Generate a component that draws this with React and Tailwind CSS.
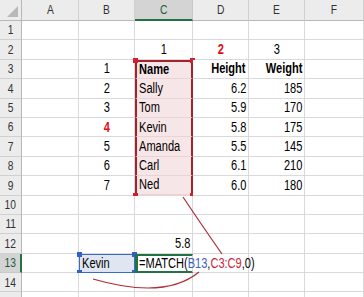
import React from "react";

const COLS = ["A", "B", "C", "D", "E", "F"];

const rows = [
  { n: 1, c: {} },
  { n: 2, c: { C: ["1", "c"], D: ["2", "c", "red"], E: ["3", "c"] } },
  { n: 3, c: { B: ["1", "c"], C: ["Name", "l", "bold"], D: ["Height", "r", "bold"], E: ["Weight", "r", "bold"] } },
  { n: 4, c: { B: ["2", "c"], C: ["Sally", "l"], D: ["6.2", "r"], E: ["185", "r"] } },
  { n: 5, c: { B: ["3", "c"], C: ["Tom", "l"], D: ["5.9", "r"], E: ["170", "r"] } },
  { n: 6, c: { B: ["4", "c", "red"], C: ["Kevin", "l"], D: ["5.8", "r"], E: ["175", "r"] } },
  { n: 7, c: { B: ["5", "c"], C: ["Amanda", "l"], D: ["5.5", "r"], E: ["145", "r"] } },
  { n: 8, c: { B: ["6", "c"], C: ["Carl", "l"], D: ["6.1", "r"], E: ["210", "r"] } },
  { n: 9, c: { B: ["7", "c"], C: ["Ned", "l"], D: ["6.0", "r"], E: ["180", "r"] } },
  { n: 10, c: {} },
  { n: 11, c: {} },
  { n: 12, c: { C: ["5.8", "r"] } },
  { n: 13, c: { B: ["Kevin", "l"], C: ["__formula", "l"] } },
  { n: 14, c: {} },
  { n: 15, c: {}, hide: true },
];

function Txt({ align, className = "", children }) {
  const j = align === "l" ? "justify-start" : align === "r" ? "justify-end" : "justify-center";
  const o = align === "l" ? "origin-left" : align === "r" ? "origin-right" : "origin-center";
  return (
    <div className={`flex h-full items-center px-[2px] ${j}`}>
      <span className={`inline-block whitespace-nowrap scale-x-[0.79] ${o} ${className}`}>{children}</span>
    </div>
  );
}

function Formula() {
  return (
    <div className="flex h-full items-center pl-[1px]">
      <span className="inline-block whitespace-nowrap scale-x-[0.79] origin-left text-black">
        =MATCH(<span className="text-[#3a62b8]">B13</span>,<span className="text-[#c8283a]">C3:C9</span>,0)
      </span>
    </div>
  );
}

const RED = "bg-[#d4202c]";
const BLUE = "bg-[#2f62c8]";

function cellStyle(col, n) {
  if (col === "C" && n >= 3 && n <= 9) {
    let s = "bg-[#f7e6e7] border-x-2 border-x-[#a3222e] border-b-[#e9d3d5]";
    if (n === 3) s += " border-t-2 border-t-[#a3222e]";
    if (n === 9) s += " border-b-2 border-b-[#a3222e]";
    else s += " border-b";
    return s;
  }
  if (col === "B" && n === 13) return "bg-[#dfe6f2] border-[1.5px] border-[#3a6cc4]";
  if (col === "C" && n === 13) return "z-10 bg-white border-y-2 border-l-[3px] border-y-[#217346] border-l-[#217346] border-r border-r-[#d9d9d9]";
  return "bg-white border-b border-r border-[#d9d9d9]";
}

function handles(col, n) {
  if (col === "C" && n === 3)
    return (
      <>
        <div className={`absolute -left-[4px] -top-[4px] h-[5px] w-[5px] ${RED}`} />
        <div className={`absolute -right-[4px] -top-[4px] h-[5px] w-[5px] ${RED}`} />
      </>
    );
  if (col === "C" && n === 9)
    return (
      <>
        <div className={`absolute -bottom-[4px] -left-[4px] h-[5px] w-[5px] ${RED}`} />
        <div className={`absolute -bottom-[4px] -right-[4px] h-[5px] w-[5px] ${RED}`} />
      </>
    );
  if (col === "B" && n === 13)
    return (
      <>
        <div className={`absolute -left-[3px] -top-[3px] h-[5px] w-[5px] ${BLUE}`} />
        <div className={`absolute -right-[3px] -top-[3px] h-[5px] w-[5px] ${BLUE}`} />
        <div className={`absolute -bottom-[3px] -left-[3px] h-[5px] w-[5px] ${BLUE}`} />
        <div className={`absolute -bottom-[3px] -right-[3px] h-[5px] w-[5px] ${BLUE}`} />
      </>
    );
  return null;
}

export default function App() {
  return (
    <div className="relative h-[297px] w-[364px] overflow-hidden bg-white font-['Liberation_Sans',Arial,sans-serif] text-[14px] text-black">
      <div className="grid grid-cols-[22px_57px_56px_58px_56px_56px_59px]">
        <div className="relative h-[21px] border-b border-r border-[#b8b8b8] bg-[#ececec]">
          <div className="absolute bottom-[3px] right-[3px] h-0 w-0 border-b-[11px] border-l-[11px] border-b-[#b9b9b9] border-l-transparent" />
        </div>
        {COLS.map((c) => (
          <div
            key={c}
            className={
              c === "C"
                ? "h-[21px] border-b-2 border-r border-b-[#217346] border-r-[#c8c8c8] bg-[#d4d4d4] text-[#1e5c37]"
                : "h-[21px] border-b border-r border-b-[#b8b8b8] border-r-[#d0d0d0] bg-[#ececec] text-[#333]"
            }
          >
            <Txt align="c" className="text-[13px]">{c}</Txt>
          </div>
        ))}
        {rows.map((r) => (
          <React.Fragment key={r.n}>
            <div
              className={
                r.n === 13
                  ? "h-[19.4px] border-b border-r-2 border-b-[#c8c8c8] border-r-[#217346] bg-[#d4d4d4] text-[#1e5c37]"
                  : "h-[19.4px] border-b border-r border-b-[#d0d0d0] border-r-[#b8b8b8] bg-[#ececec] text-[#333]"
              }
            >
              {!r.hide && <Txt align="c" className="text-[13px]">{r.n}</Txt>}
            </div>
            {COLS.map((c) => {
              const cell = r.c[c];
              let content = null;
              if (cell) {
                const [t, a, s] = cell;
                if (t === "__formula") content = <Formula />;
                else
                  content = (
                    <Txt align={a} className={s === "red" ? "font-bold text-[#e0101a]" : s === "bold" ? "font-bold" : ""}>
                      {t}
                    </Txt>
                  );
              }
              return (
                <div key={c} className={`relative h-[19.4px] overflow-visible ${cellStyle(c, r.n)}`}>
                  {content}
                  {handles(c, r.n)}
                </div>
              );
            })}
          </React.Fragment>
        ))}
      </div>

      <svg className="pointer-events-none absolute inset-0" width="364" height="297" viewBox="0 0 364 297">
        <path d="M183 197 Q201 224 222 254" fill="none" stroke="#b02a38" strokeWidth="1.2" />
        <path d="M93 279 Q165 300 199 272" fill="none" stroke="#b02a38" strokeWidth="1.2" />
      </svg>
    </div>
  );
}
